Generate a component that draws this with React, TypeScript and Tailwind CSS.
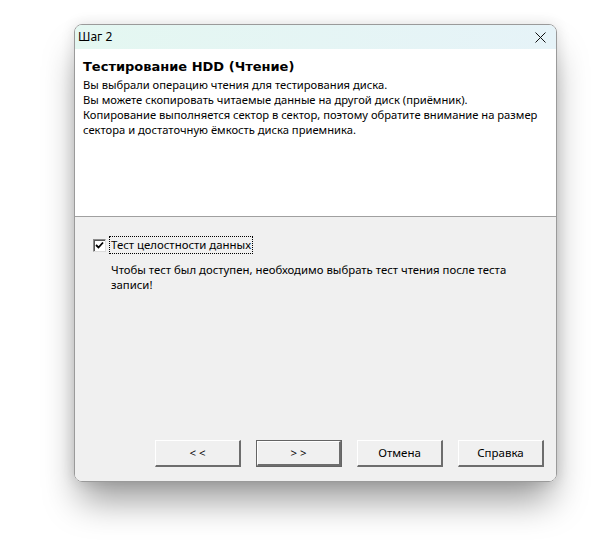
import React from "react";

const ui = { fontFamily: '"Noto Sans", "Liberation Sans", sans-serif' };
const heading = { fontFamily: '"DejaVu Sans", "Liberation Sans", sans-serif' };

function ClassicButton({ label, isDefault }: { label: string; isDefault?: boolean }) {
  return (
    <div
      className={
        "w-[86px] h-[27px] " +
        (isDefault ? "border border-[#646464]" : "")
      }
    >
      <div className="h-full w-full border-t border-l border-white border-b-2 border-r-2 border-b-[#6d6d6d] border-r-[#6d6d6d] bg-[#f0f0f0] flex items-center justify-center text-[11.5px] text-black whitespace-nowrap">
        {label}
      </div>
    </div>
  );
}

export default function App() {
  return (
    <div className="w-[615px] h-[552px] bg-white pl-[74px] pt-[24px]" style={ui}>
      <div className="w-[483px] h-[458px] rounded-[8px] border border-[#9a9a9a] overflow-hidden flex flex-col shadow-[0_24px_36px_-6px_rgba(0,0,0,0.4),0_0_14px_rgba(0,0,0,0.12)]">
        {/* title bar */}
        <div className="h-[24px] flex items-center justify-between pl-[3px] pr-[10px] bg-gradient-to-r from-[#e4f7f1] to-[#e6f3f8]">
          <span className="text-[12px] text-black">Шаг 2</span>
          <svg width="11" height="11" viewBox="0 0 11 11">
            <path d="M0.5 0.5 L10.5 10.5 M10.5 0.5 L0.5 10.5" stroke="#111" strokeWidth="1" />
          </svg>
        </div>

        {/* header */}
        <div className="h-[168px] bg-white border-b border-[#a0a0a0] px-[8px] pt-[9px]">
          <div className="text-[13px] font-bold text-black leading-[18px]" style={heading}>
            Тестирование HDD (Чтение)
          </div>
          <div className="text-[11.2px] leading-[15px] text-black mt-[1px] whitespace-nowrap">
            <div>Вы выбрали операцию чтения для тестирования диска.</div>
            <div>Вы можете скопировать читаемые данные на другой диск (приёмник).</div>
            <div>Копирование выполняется сектор в сектор, поэтому обратите внимание на размер</div>
            <div>сектора и достаточную ёмкость диска приемника.</div>
          </div>
        </div>

        {/* body */}
        <div className="flex-1 bg-[#f0f0f0] flex flex-col">
          <div className="pt-[19px] pl-[18px] flex items-center gap-[3px]">
            <div className="w-[13px] h-[13px] bg-white border border-t-[#8a8a8a] border-l-[#8a8a8a] border-b-[#dcdcdc] border-r-[#dcdcdc] shadow-[inset_1px_1px_0_#555] flex items-center justify-center">
              <svg width="9" height="9" viewBox="0 0 9 9">
                <path d="M1 4 L3.5 6.5 L8 1.5" stroke="#000" strokeWidth="1.8" fill="none" />
              </svg>
            </div>
            <div className="border border-dotted border-black px-[1px] h-[18px] flex items-center text-[11.4px] text-black whitespace-nowrap">
              Тест целостности данных
            </div>
          </div>
          <div className="pl-[36px] pt-[8px] text-[11.35px] leading-[15px] text-black whitespace-nowrap">
            <div>Чтобы тест был доступен, необходимо выбрать тест чтения после теста</div>
            <div>записи!</div>
          </div>

          <div className="mt-auto flex justify-end gap-[15px] pr-[12px] pb-[14px]">
            <ClassicButton label="< <" />
            <ClassicButton label="> >" isDefault />
            <ClassicButton label="Отмена" />
            <ClassicButton label="Справка" />
          </div>
        </div>
      </div>
    </div>
  );
}
